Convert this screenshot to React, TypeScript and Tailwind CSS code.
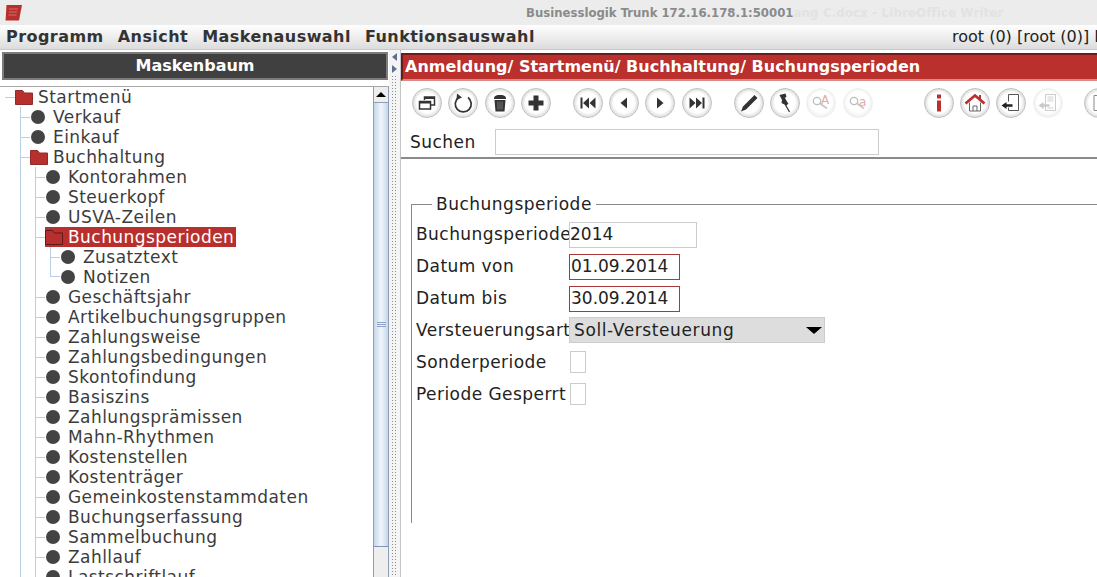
const SANS = "font-['DejaVu_Sans',sans-serif]";

type TreeItem = {
  label: string;
  guides: ("none" | "line" | "tee" | "elbow")[];
  icon: "folder" | "dot";
  selected?: boolean;
};

const line: TreeItem["guides"] = ["none", "line", "tee"];

const treeItems: TreeItem[] = [
  { label: "Startmenü", guides: ["none"], icon: "folder" },
  { label: "Verkauf", guides: ["none", "tee"], icon: "dot" },
  { label: "Einkauf", guides: ["none", "tee"], icon: "dot" },
  { label: "Buchhaltung", guides: ["none", "tee"], icon: "folder" },
  { label: "Kontorahmen", guides: line, icon: "dot" },
  { label: "Steuerkopf", guides: line, icon: "dot" },
  { label: "USVA-Zeilen", guides: line, icon: "dot" },
  { label: "Buchungsperioden", guides: line, icon: "folder", selected: true },
  { label: "Zusatztext", guides: ["none", "line", "line", "tee"], icon: "dot" },
  { label: "Notizen", guides: ["none", "line", "line", "elbow"], icon: "dot" },
  { label: "Geschäftsjahr", guides: line, icon: "dot" },
  { label: "Artikelbuchungsgruppen", guides: line, icon: "dot" },
  { label: "Zahlungsweise", guides: line, icon: "dot" },
  { label: "Zahlungsbedingungen", guides: line, icon: "dot" },
  { label: "Skontofindung", guides: line, icon: "dot" },
  { label: "Basiszins", guides: line, icon: "dot" },
  { label: "Zahlungsprämissen", guides: line, icon: "dot" },
  { label: "Mahn-Rhythmen", guides: line, icon: "dot" },
  { label: "Kostenstellen", guides: line, icon: "dot" },
  { label: "Kostenträger", guides: line, icon: "dot" },
  { label: "Gemeinkostenstammdaten", guides: line, icon: "dot" },
  { label: "Buchungserfassung", guides: line, icon: "dot" },
  { label: "Sammelbuchung", guides: line, icon: "dot" },
  { label: "Zahllauf", guides: line, icon: "dot" },
  { label: "Lastschriftlauf", guides: line, icon: "dot" },
];

function Guide({ kind, first }: { kind: TreeItem["guides"][number]; first: boolean }) {
  if (kind === "line") {
    return (
      <div className="h-5 w-[15px] shrink-0 pl-[5px]">
        <div className="h-full border-l border-[#b8cfe5]" />
      </div>
    );
  }
  if (kind === "tee") {
    return (
      <div className="h-5 w-[15px] shrink-0 pl-[5px]">
        <div className="flex h-full items-center border-l border-[#b8cfe5]">
          <div className="w-[9px] border-t border-[#b8cfe5]" />
        </div>
      </div>
    );
  }
  if (kind === "elbow") {
    return (
      <div className="h-5 w-[15px] shrink-0 pl-[5px]">
        <div className="h-[10px] border-b border-l border-[#b8cfe5]" />
      </div>
    );
  }
  return (
    <div className="flex h-5 w-[15px] shrink-0 items-center pl-[5px]">
      {first && <div className="w-[10px] border-t border-[#b8cfe5]" />}
    </div>
  );
}

function FolderIcon({ selected }: { selected?: boolean }) {
  return (
    <svg width="18" height="18" viewBox="0 0 18 18" className="shrink-0">
      <path d="M0.500 2.500h7l2 2.500h8v11.500h-17z" fill="#b8302e" stroke={selected ? "#5c1a18" : "#8f2b29"} />
    </svg>
  );
}

function TreeRow({ item }: { item: TreeItem }) {
  return (
    <div className="flex h-5 items-center">
      {item.guides.map((g, i) => (
        <Guide key={i} kind={g} first={item.guides.length === 1} />
      ))}
      <div className={`flex h-5 items-center ${item.selected ? "bg-[#b8302e] text-white" : "text-[#3c3c3c]"}`}>
        <div className="flex w-[23px] shrink-0 items-center">
          {item.icon === "folder" ? (
            <FolderIcon selected={item.selected} />
          ) : (
            <div className="ml-[1px] h-[14px] w-[14px] rounded-full bg-[#434343]" />
          )}
        </div>
        <span className="whitespace-nowrap pr-[2px] text-[17px] leading-5 tracking-[0.45px]">{item.label}</span>
      </div>
    </div>
  );
}

function RoundButton({ children, faded }: { children: React.ReactNode; faded?: boolean }) {
  return (
    <div
      className={`flex h-[30px] w-[30px] shrink-0 items-center justify-center rounded-full border bg-[radial-gradient(circle_at_50%_45%,#ffffff_50%,#e2e2e2_100%)] ${
        faded
          ? "border-[#efefef] shadow-[inset_0_0_2px_1px_#f2f2f2]"
          : "border-[#bebebe] shadow-[inset_0_0_2px_2px_#e4e4e4]"
      }`}
    >
      {children}
    </div>
  );
}

function Icon({ children }: { children: React.ReactNode }) {
  return (
    <svg width="22" height="22" viewBox="0 0 22 22">
      {children}
    </svg>
  );
}

function Field({ label, children }: { label: string; children: React.ReactNode }) {
  return (
    <div className="flex h-[26px] items-center">
      <span className="w-[153px] shrink-0 overflow-hidden whitespace-nowrap text-[17px] tracking-[0.45px] text-[#222]">
        {label}
      </span>
      {children}
    </div>
  );
}

export default function App() {
  return (
    <div className={`${SANS} flex h-[577px] w-[1097px] flex-col overflow-hidden bg-white`}>
      {/* window title */}
      <div className="flex h-[25px] shrink-0 items-center bg-[#ececec]">
        <svg width="20" height="20" viewBox="0 0 20 20" className="ml-[3px] shrink-0">
          <path d="M3.500 2H19l-3 15.500H2.500z" fill="#b8302e" />
          <path d="M6 6h9M6 9h8M5.500 12h8" stroke="#cf6f6c" strokeWidth="1" />
        </svg>
        <span className="ml-[503px] whitespace-nowrap font-['DejaVu_Sans_Condensed','DejaVu_Sans',sans-serif] text-[13px] font-bold text-[#8a8a8a]">
          Businesslogik Trunk 172.16.178.1:50001
        </span>
        <span className="whitespace-nowrap font-['DejaVu_Sans_Condensed','DejaVu_Sans',sans-serif] text-[13px] font-bold tracking-[0.2px] text-[#e2e2e2]">
          ang C.docx - LibreOffice Writer
        </span>
      </div>

      {/* menu */}
      <div className="flex h-[25px] shrink-0 items-center border-b border-[#c8c8c8] bg-gradient-to-b from-white to-[#dcdcdc] pl-[6px]">
        <div className="flex gap-[14px] text-base font-bold tracking-[0.45px] text-[#333]">
          <span>Programm</span>
          <span>Ansicht</span>
          <span>Maskenauswahl</span>
          <span>Funktionsauswahl</span>
        </div>
        <div className="ml-auto w-[145px] overflow-hidden whitespace-nowrap text-base text-[#222]">
          root (0) [root (0)] Root
        </div>
      </div>

      <div className="flex min-h-0 flex-1">
        {/* left panel */}
        <div className="flex w-[389px] shrink-0 flex-col">
          <div className="ml-[2px] mt-[2px] flex h-[28px] w-[386px] shrink-0 items-center justify-center border-2 border-[#7c7c7c] bg-[#404040] text-base font-bold text-white">
            Maskenbaum
          </div>
          <div className="mt-[6px] flex min-h-0 flex-1 border-t border-[#a8a8a8]">
            <div className="min-w-0 flex-1 overflow-hidden">
              {treeItems.map((item) => (
                <TreeRow key={item.label} item={item} />
              ))}
            </div>
            <div className="flex w-4 shrink-0 flex-col border-x border-[#8d9db5]">
              <div className="flex h-4 shrink-0 items-center justify-center border-b border-[#8d9db5] bg-[#eeeeee]">
                <div className="h-0 w-0 border-x-[5px] border-b-[5px] border-x-transparent border-b-black" />
              </div>
              <div className="flex h-[444px] shrink-0 flex-col items-center justify-center gap-[1px] border-b border-[#7f93b5] bg-gradient-to-r from-[#c5d7ea] via-[#f2f6fb] to-[#c5d7ea]">
                <div className="w-[9px] border-t border-[#8fa5c7]" />
                <div className="w-[9px] border-t border-[#8fa5c7]" />
                <div className="w-[9px] border-t border-[#8fa5c7]" />
              </div>
              <div className="flex-1 bg-[#eeeeee]" />
            </div>
          </div>
        </div>

        {/* splitter */}
        <div className="flex w-[12px] shrink-0 flex-col items-center border-r border-[#c4c4c4] bg-[#f4f4f4] pt-[3px]">
          <div className="h-0 w-0 border-y-[4px] border-r-[5px] border-y-transparent border-r-[#5c6f90]" />
          <div className="mt-[4px] h-0 w-0 border-y-[4px] border-l-[5px] border-y-transparent border-l-[#5c6f90]" />
          <div className="mt-[2px] w-[7px] flex-1 bg-[radial-gradient(#8f8f8f_1px,transparent_1px)] bg-[length:3px_3px]" />
        </div>

        {/* right panel */}
        <div className="min-w-0 flex-1 bg-white">
          <div className="mt-[3px] flex h-[28px] items-center border-b-2 border-l-2 border-t-2 border-b-[#d78a88] border-l-[#6e1b1a] border-t-[#6e1b1a] bg-[#b9302d] pl-[2px] text-base font-bold text-white">
            Anmeldung/ Startmenü/ Buchhaltung/ Buchungsperioden
          </div>

          {/* toolbar */}
          <div className="flex h-[44px] items-center pl-[11px]">
            <div className="flex gap-[6.3px]">
              <RoundButton>
                <Icon>
                  <path d="M8.500 8V5H18.500V13H15" fill="none" stroke="#333" strokeWidth="1.500" />
                  <path d="M3.500 9.500H14.500V17H3.500z" fill="none" stroke="#333" strokeWidth="1.500" />
                  <path d="M3.500 10.500H14.500" stroke="#333" strokeWidth="2" />
                  <path d="M9 6h9.500" stroke="#333" strokeWidth="2" />
                </Icon>
              </RoundButton>
              <RoundButton>
                <Icon>
                  <path d="M6.500 5.500a8 8 0 1 0 9.500 0" fill="none" stroke="#333" strokeWidth="1.700" />
                  <path d="M5 1.500l5 4-5.500 2.500z" fill="#333" />
                </Icon>
              </RoundButton>
              <RoundButton>
                <Icon>
                  <path d="M5 5.500c1-2 3-2.500 6-2.500s5 .5 6 2.500v1.500H5z" fill="#333" />
                  <path d="M5.500 8h11l-1 11.500h-9z" fill="#333" />
                  <path d="M8.800 9.500l.3 8M11 9.500v8M13.200 9.500l-.3 8" stroke="#8a8a8a" strokeWidth="0.800" />
                </Icon>
              </RoundButton>
              <RoundButton>
                <Icon>
                  <path d="M8.500 3.500h5v5h5v5h-5v5h-5v-5h-5v-5h5z" fill="#333" />
                </Icon>
              </RoundButton>
            </div>
            <div className="ml-[22px] flex gap-[6.3px]">
              <RoundButton>
                <Icon>
                  <path d="M3.500 5.500h2v11h-2zM12 5.500v11l-6-5.500zM18.500 5.500v11l-6-5.500z" fill="#333" />
                </Icon>
              </RoundButton>
              <RoundButton>
                <Icon>
                  <path d="M14 5.500v11l-6.500-5.500z" fill="#333" />
                </Icon>
              </RoundButton>
              <RoundButton>
                <Icon>
                  <path d="M8 5.500v11l6.500-5.500z" fill="#333" />
                </Icon>
              </RoundButton>
              <RoundButton>
                <Icon>
                  <path d="M18.500 5.500h-2v11h2zM10 5.500v11l6-5.500zM3.500 5.500v11l6-5.500z" fill="#333" />
                </Icon>
              </RoundButton>
            </div>
            <div className="ml-[22px] flex gap-[6.3px]">
              <RoundButton>
                <Icon>
                  <path d="M16.500 3l3 3L8 17.500l-5 2 2-5z" fill="#333" />
                </Icon>
              </RoundButton>
              <RoundButton>
                <Icon>
                  <path d="M5.500 3l6-1.500 1 3-1.500 1.500 2.500 4.500 1 1-2 2-5-2.500 .5-3L7 6z" fill="#333" />
                  <path d="M11 12l4.500 8" stroke="#333" strokeWidth="1.200" />
                </Icon>
              </RoundButton>
              <RoundButton faded>
                <Icon>
                  <circle cx="7" cy="9" r="3.700" fill="none" stroke="#bdbdbd" strokeWidth="1.300" />
                  <path d="M10 11.500l7 5" stroke="#c9c9c9" strokeWidth="2" />
                  <text x="11" y="12" fontSize="12" fill="#e3a9a6">
                    A
                  </text>
                </Icon>
              </RoundButton>
              <RoundButton faded>
                <Icon>
                  <circle cx="7" cy="9" r="3.700" fill="none" stroke="#bdbdbd" strokeWidth="1.300" />
                  <path d="M10 11.500l7 5" stroke="#c9c9c9" strokeWidth="2" />
                  <text x="12" y="14" fontSize="12" fill="#e3a9a6">
                    a
                  </text>
                </Icon>
              </RoundButton>
            </div>
            <div className="ml-[51px] flex gap-[6.3px]">
              <RoundButton>
                <Icon>
                  <path d="M9 2.500h4v4H9z" fill="#b9302d" />
                  <path d="M9 8.500h4v11H9z" fill="#b9302d" />
                </Icon>
              </RoundButton>
              <RoundButton>
                <Icon>
                  <path d="M5.500 10.500v8.500h11v-8.500" fill="#fff" stroke="#666" />
                  <path d="M9 19v-5h4v5" fill="none" stroke="#666" />
                  <path d="M15 3h2v4h-2z" fill="#b9302d" />
                  <path d="M1.500 11.500L11 3.500l9.500 8" fill="none" stroke="#b9302d" strokeWidth="2.800" />
                </Icon>
              </RoundButton>
              <RoundButton>
                <Icon>
                  <path d="M8.500 2.500h10v16h-10v-3M8.500 2.500v7" fill="#fff" stroke="#555" />
                  <path d="M1.500 13.500l5-3.500v2.200h6v2.600h-6V17z" fill="#222" />
                </Icon>
              </RoundButton>
              <RoundButton faded>
                <Icon>
                  <path d="M8.500 2.500h10v16h-10z" fill="#fff" stroke="#cccccc" />
                  <path d="M10.500 5h6M10.500 7h6M10.500 9h6M10.500 16h6" stroke="#d2d2d2" />
                  <path d="M1.500 13.500l5-3.500v2.200h6v2.600h-6V17z" fill="#c9c9c9" />
                </Icon>
              </RoundButton>
            </div>
            <div className="ml-[21px]">
              <RoundButton>
                <Icon>
                  <path d="M6 3.500h10v15H6z" fill="#fff" stroke="#888" />
                </Icon>
              </RoundButton>
            </div>
          </div>

          {/* search */}
          <div className="flex h-[34px] items-start border-b-2 border-[#8a8a8a] pl-[9px]">
            <span className="w-[85px] pt-[5px] text-[17px] leading-6 tracking-[0.45px] text-[#222]">Suchen</span>
            <div className="mt-[4px] h-[26px] w-[384px] border border-[#cccccc] bg-white" />
          </div>

          {/* form */}
          <fieldset className="ml-[10px] mt-[36px] h-[328px] border-l border-t border-[#8a8a8a] pl-[4px]">
            <legend className="ml-[16px] px-[4px] text-[17px] leading-[19px] tracking-[0.5px] text-[#222]">
              Buchungsperiode
            </legend>
            <div className="mt-[8px] flex flex-col gap-[6px]">
              <Field label="Buchungsperiode">
                <div className="flex h-[26px] w-[128px] items-center border border-[#cccccc] text-[17px] text-[#222]">
                  2014
                </div>
              </Field>
              <Field label="Datum von">
                <div className="flex h-[26px] w-[111px] items-center border border-[#a83a38] pl-[1px] text-[17px] text-[#222]">
                  01.09.2014
                </div>
              </Field>
              <Field label="Datum bis">
                <div className="flex h-[26px] w-[111px] items-center border border-[#a83a38] pl-[1px] text-[17px] text-[#222]">
                  30.09.2014
                </div>
              </Field>
              <Field label="Versteuerungsart">
                <div className="mb-[2px] flex h-[26px] w-[256px] items-center justify-between border border-[#cccccc] bg-[#dddddd] pl-[4px] pr-[2px] pt-[1px] text-[17px] tracking-[0.6px] text-[#222]">
                  Soll-Versteuerung
                  <div className="h-0 w-0 border-x-[8px] border-t-[7px] border-x-transparent border-t-black" />
                </div>
              </Field>
              <Field label="Sonderperiode">
                <div className="mb-[2px] ml-[1px] h-[22px] w-4 border border-[#cccccc]" />
              </Field>
              <Field label="Periode Gesperrt">
                <div className="mb-[2px] ml-[1px] h-[22px] w-4 border border-[#cccccc]" />
              </Field>
            </div>
          </fieldset>
        </div>
      </div>
    </div>
  );
}
